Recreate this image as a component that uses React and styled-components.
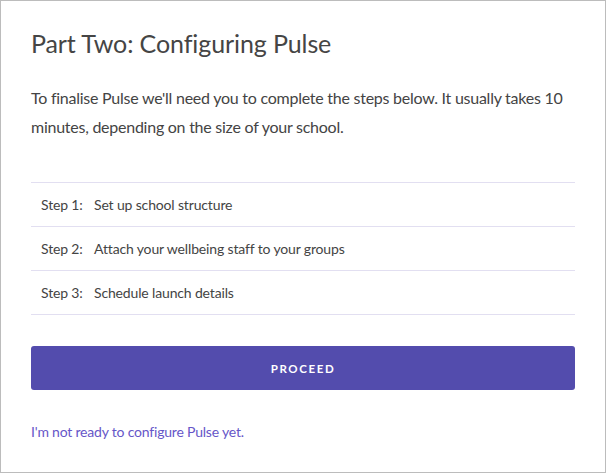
import React from "react";
import styled, { createGlobalStyle } from "styled-components";

const GlobalStyle = createGlobalStyle`
  body {
    margin: 0;
    background: #fff;
    font-family: "Lato", "Open Sans", sans-serif;
  }
`;

const steps = [
  { label: "Step 1:", text: "Set up school structure" },
  { label: "Step 2:", text: "Attach your wellbeing staff to your groups" },
  { label: "Step 3:", text: "Schedule launch details" }
];

const App = () => {
  return (
    <>
      <GlobalStyle />
      <Frame>
        <Title>Part Two: Configuring Pulse</Title>
        <Intro>
          To finalise Pulse we'll need you to complete the steps below. It
          usually takes 10 minutes, depending on the size of your school.
        </Intro>
        <StepList>
          {steps.map(step => (
            <StepRow key={step.label}>
              <StepLabel>{step.label}</StepLabel>
              {step.text}
            </StepRow>
          ))}
        </StepList>
        <ProceedButton>PROCEED</ProceedButton>
        <NotReady href="#">I'm not ready to configure Pulse yet.</NotReady>
      </Frame>
    </>
  );
};

export default App;

const Frame = styled.div`
  box-sizing: border-box;
  width: 606px;
  height: 473px;
  border: 1px solid #bcbcbc;
  padding: 0 30px;
  display: flex;
  flex-direction: column;
  color: #444;
`;

const Title = styled.h1`
  margin: 26px 0 0 0;
  font-size: 25px;
  font-weight: 400;
  letter-spacing: -0.1px;
  line-height: 32px;
  color: #454545;
`;

const Intro = styled.p`
  margin: 24px 0 0 0;
  font-size: 16px;
  letter-spacing: -0.25px;
  line-height: 29px;
  color: #444;
`;

const StepList = styled.div`
  margin-top: 41px;
  border-top: 1px solid #e2dff1;
`;

const StepRow = styled.div`
  height: 43px;
  display: flex;
  align-items: center;
  padding-left: 10px;
  border-bottom: 1px solid #e2dff1;
  font-size: 14px;
  letter-spacing: -0.15px;
  color: #444;
`;

const StepLabel = styled.span`
  width: 53px;
`;

const ProceedButton = styled.button`
  margin-top: 31px;
  height: 44px;
  border: none;
  border-radius: 3px;
  background: #534cad;
  color: #fff;
  font-family: "Lato", sans-serif;
  font-size: 11.5px;
  font-weight: 700;
  letter-spacing: 1.6px;
  cursor: pointer;
`;

const NotReady = styled.a`
  margin-top: 33px;
  font-size: 14px;
  letter-spacing: -0.2px;
  color: #6656c8;
  text-decoration: none;
`;
